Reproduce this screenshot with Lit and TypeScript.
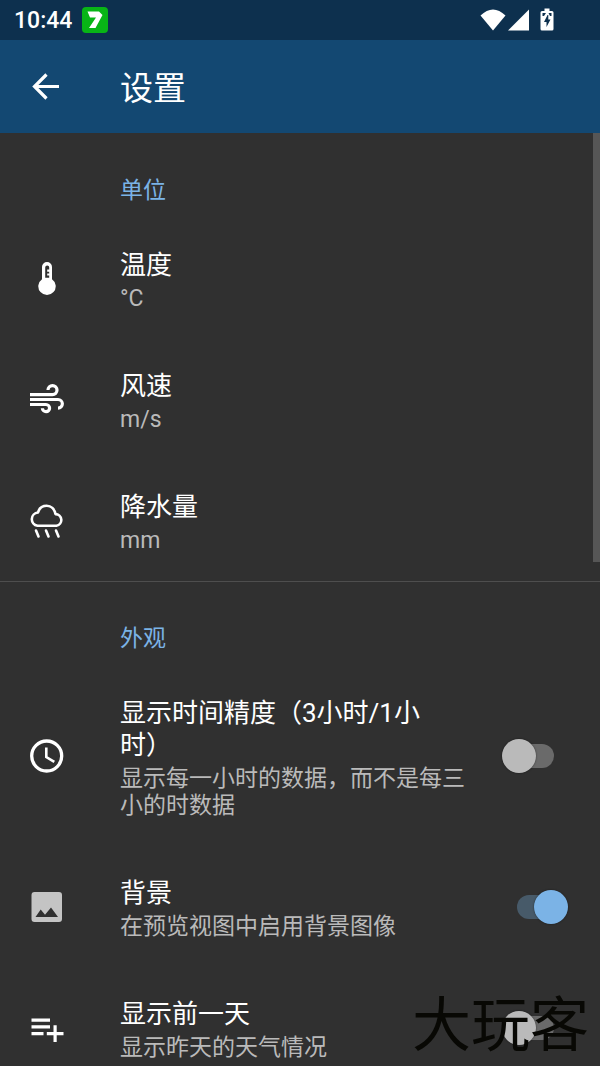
import { LitElement, html, css, svg, nothing } from "lit";
import { customElement, property } from "lit/decorators.js";

const icons: Record<string, unknown> = {
  thermometer: svg`
    <path fill-rule="evenodd" d="M15 8a5 5 0 0 1 10 0v12.200a8.700 8.700 0 1 1-10 0zM18.200 8.500v10.200h4V16.500h-2v-2h2v-1.800h-2V10.500h2V8.500a2 2 0 0 0-4 0z" fill="#fff"/>`,
  wind: svg`
    <g fill="none" stroke="#fff" stroke-width="3.200">
      <path d="M3 14.600H25.500A4.500 4.500 0 1 0 21 10.100"/>
      <path d="M3 19.500H31A4.300 4.300 0 0 1 31 28.200"/>
      <path d="M3 24.500H19A3.600 3.600 0 1 1 15.400 28.200"/>
    </g>`,
  rain: svg`
    <g fill="none" stroke="#fff" stroke-width="2.600" stroke-linecap="round" stroke-linejoin="round">
      <path d="M10.500 24.800H29.500A5.900 5.900 0 0 0 28.500 13.100C27.500 8 24 4.800 19.700 4.800S12 7.500 11 11.500A6.700 6.700 0 0 0 10.500 24.800z"/>
      <path d="M9 29.500l2.500 6M19 29.500l2.500 6M29 29.500l2.500 6"/>
    </g>`,
  clock: svg`
    <circle cx="19.700" cy="20" r="15" fill="none" stroke="#fff" stroke-width="3.300"/>
    <path d="M19.300 11.500V21l8 4.800" fill="none" stroke="#fff" stroke-width="2.600"/>`,
  image: svg`
    <path fill-rule="evenodd" d="M7.500 5H32A3 3 0 0 1 35 8V32A3 3 0 0 1 32 35H7.500A3 3 0 0 1 4.500 32V8A3 3 0 0 1 7.500 5zM8.500 30H31L24 20.500 18 27.800 13.700 22.500z" fill="#c4c4c4"/>`,
  listAdd: svg`
    <path d="M4.500 10.500H23V13.700H4.500zM4.500 17.200H23V20.400H4.500zM4.500 24H16.500V27.200H4.500zM26.500 17.200H29.700V24H36.500V27.200H29.700V34H26.500V27.200H19.800V24H26.500z" fill="#fff"/>`,
};

@customElement("setting-row")
class SettingRow extends LitElement {
  @property() icon = "";
  @property() heading = "";
  @property() summary = "";
  @property({ type: Boolean }) toggle = false;
  @property({ type: Boolean }) on = false;

  static styles = css`
    :host {
      display: block;
    }
    .row {
      box-sizing: border-box;
      width: 100%;
      display: flex;
      align-items: center;
      margin: 0;
      padding: 27px 32px 27px 27px;
      border: 0;
      background: none;
      color: #fff;
      font: inherit;
      text-align: left;
      cursor: pointer;
    }
    .icon {
      flex: none;
      width: 40px;
      height: 40px;
      margin-right: 53px;
    }
    .text {
      flex: 1;
      display: flex;
      flex-direction: column;
      gap: 4px;
      padding-top: 4px;
      text-spacing-trim: space-all;
    }
    .heading {
      font-size: 26px;
      line-height: 32px;
    }
    .summary {
      font-size: 23px;
      line-height: 27px;
      color: #bababa;
    }
    .switch {
      appearance: none;
      flex: none;
      position: relative;
      width: 66px;
      height: 34px;
      margin: 0 0 0 36px;
      cursor: pointer;
    }
    .switch::before {
      content: "";
      position: absolute;
      top: 5px;
      left: 4px;
      width: 48px;
      height: 24px;
      border-radius: 12px;
      background: #6a6a6a;
    }
    .switch::after {
      content: "";
      position: absolute;
      top: 0;
      left: 0;
      width: 34px;
      height: 34px;
      border-radius: 50%;
      background: #bababa;
      box-shadow: 0 0 2px #0008;
    }
    .switch:checked::before {
      left: 15px;
      background: #475a69;
    }
    .switch:checked::after {
      left: 32px;
      background: #7bb3e6;
    }
  `;

  render() {
    const body = html`
      <svg class="icon" viewBox="0 0 40 40" aria-hidden="true">${icons[this.icon] ?? nothing}</svg>
      <span class="text">
        <span class="heading">${this.heading}</span>
        <span class="summary">${this.summary}</span>
      </span>`;
    return this.toggle
      ? html`<label class="row">${body}<input class="switch" type="checkbox" role="switch" .checked=${this.on} /></label>`
      : html`<button class="row" type="button">${body}</button>`;
  }
}

@customElement("app-root")
class AppRoot extends LitElement {
  static styles = css`
    :host {
      position: relative;
      display: flex;
      flex-direction: column;
      height: 100vh;
      overflow: hidden;
      background: #303030;
      color: #fff;
      font-family: Roboto, "Noto Sans CJK SC", sans-serif;
    }
    .status {
      flex: none;
      display: flex;
      align-items: center;
      height: 40px;
      padding: 0 44px 0 14px;
      background: #0d304e;
    }
    .time {
      font-size: 23px;
      line-height: 28px;
      font-weight: 500;
      padding-top: 2px;
      margin-right: 10px;
    }
    .app {
      width: 26px;
      height: 26px;
    }
    .signals {
      width: 76px;
      height: 24px;
      margin-left: auto;
    }
    .toolbar {
      flex: none;
      display: flex;
      align-items: center;
      height: 93px;
      padding: 0 26px;
      background: #134872;
    }
    .back {
      width: 40px;
      height: 40px;
      margin: 0 54px 0 0;
      padding: 0;
      border: 0;
      background: none;
      cursor: pointer;
    }
    .title {
      margin: 0;
      padding-top: 4px;
      font-size: 33px;
      line-height: 40px;
      font-weight: 400;
    }
    .list {
      position: relative;
      flex: 1;
      min-height: 0;
      overflow: hidden;
      padding-top: 1px;
    }
    .group + .group {
      border-top: 1px solid #4e4e4e;
    }
    .caption {
      margin: 0;
      padding: 43px 26px 13px 120px;
      font-size: 23px;
      line-height: 28px;
      font-weight: 400;
      color: #7bb3e6;
    }
    .scrollbar {
      position: absolute;
      top: 0;
      right: 0;
      width: 7px;
      height: 46%;
      background: #565656;
    }
    .watermark {
      position: absolute;
      right: 11px;
      bottom: 10px;
      font-size: 59px;
      line-height: 60px;
      color: #080804;
      pointer-events: none;
    }
  `;

  render() {
    return html`
      <div class="status">
        <span class="time">10:44</span>
        <svg class="app" viewBox="0 0 26 26" aria-hidden="true">
          <rect width="26" height="26" rx="4" fill="#08b516"/>
          <path d="M5.500 4.500H17L20.500 8 13.500 21H7L14 10.500H8z" fill="#fff"/>
        </svg>
        <svg class="signals" viewBox="0 0 76 24" fill="#fff" aria-hidden="true">
          <path d="M.5 7.500Q13-4.500 25.500 7.500L13 22.500z"/>
          <path d="M28 22.500L49 1.500V22.500z"/>
          <path fill-rule="evenodd" d="M64.500 0.500H69.500V3H72Q73.500 3 73.500 4.500V21Q73.500 22.500 72 22.500H62Q60.500 22.500 60.500 21V4.500Q60.500 3 62 3H64.500zM67.500 7L64 14H66.500V19L70.500 11.500H68.300V7zM62.500 5V8H64L66 5zM68.500 5H71.500V8H70z"/>
        </svg>
      </div>
      <header class="toolbar">
        <button class="back" type="button" aria-label="返回">
          <svg width="40" height="40" viewBox="0 0 40 40" fill="none" stroke="#fff" stroke-width="3.200" aria-hidden="true">
            <path d="M33 19.500H9M20.500 7.500L8.500 19.500L20.500 31.500"/>
          </svg>
        </button>
        <h1 class="title">设置</h1>
      </header>
      <main class="list">
        <section class="group">
          <h2 class="caption">单位</h2>
          <setting-row icon="thermometer" heading="温度" summary="°C"></setting-row>
          <setting-row icon="wind" heading="风速" summary="m/s"></setting-row>
          <setting-row icon="rain" heading="降水量" summary="mm"></setting-row>
        </section>
        <section class="group">
          <h2 class="caption">外观</h2>
          <setting-row icon="clock" heading="显示时间精度（3小时/1小时）" summary="显示每一小时的数据，而不是每三小的时数据" toggle></setting-row>
          <setting-row icon="image" heading="背景" summary="在预览视图中启用背景图像" toggle on></setting-row>
          <setting-row icon="listAdd" heading="显示前一天" summary="显示昨天的天气情况" toggle></setting-row>
        </section>
        <div class="scrollbar"></div>
      </main>
      <div class="watermark">大玩客</div>
    `;
  }
}
